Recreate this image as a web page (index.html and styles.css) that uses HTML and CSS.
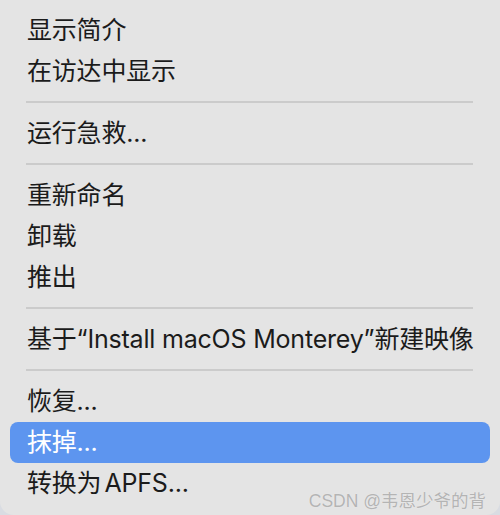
FILE: index.html
```html
<!DOCTYPE html>
<html lang="zh-CN">
<head>
    <meta charset="UTF-8">
    <meta name="viewport" content="width=device-width, initial-scale=1.0">
    <title>磁盘菜单</title>
    <link rel="stylesheet" href="styles.css">
</head>
<body>
    <div class="menu">
        <div class="item">显示简介</div>
        <div class="item">在访达中显示</div>
        <div class="separator"></div>
        <div class="item">运行急救...</div>
        <div class="separator"></div>
        <div class="item">重新命名</div>
        <div class="item">卸载</div>
        <div class="item">推出</div>
        <div class="separator"></div>
        <div class="item">基于“Install macOS Monterey”新建映像</div>
        <div class="separator"></div>
        <div class="item">恢复...</div>
        <div class="item selected">抹掉...</div>
        <div class="item">转换为<span class="narrow"> </span>APFS...</div>
        <div class="watermark">CSDN @韦恩少爷的背</div>
    </div>
</body>
</html>
```

FILE: styles.css
```css
* {
    box-sizing: border-box;
    margin: 0;
    padding: 0;
}

body {
    width: 500px;
    height: 515px;
    overflow: hidden;
    background: #d9dce2;
    font-family: Inter, "Noto Sans CJK SC", sans-serif;
}

.menu {
    position: relative;
    width: 500px;
    height: 515px;
    background: #e4e4e4;
    border-radius: 0 0 14px 14px;
    padding: 10px 10px 0 10px;
}

.item {
    height: 41px;
    line-height: 41px;
    padding-left: 17px;
    font-size: 25px;
    letter-spacing: -0.2px;
    color: #1b1b1b;
    white-space: nowrap;
    border-radius: 8px;
}

.item .narrow {
    letter-spacing: -4px;
}

.item.selected {
    background: #5d95ef;
    color: #fff;
}

.separator {
    height: 2px;
    margin: 9px 17px 10px 16px;
    background: #cbcbcb;
}

.watermark {
    position: absolute;
    right: 14px;
    bottom: 3px;
    font-family: "Liberation Sans", "Noto Sans CJK SC", sans-serif;
    font-size: 17.5px;
    color: #b4b4b4;
    text-shadow: 0 0 1px #f4f4f4;
}
```
